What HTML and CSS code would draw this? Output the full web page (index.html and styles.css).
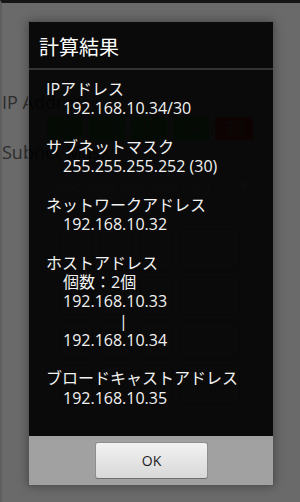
FILE: index.html
```html
<!DOCTYPE html>
<html lang="ja">
<head>
    <meta charset="UTF-8">
    <meta name="viewport" content="width=device-width, initial-scale=1.0">
    <title>計算結果</title>
    <link rel="stylesheet" href="styles.css">
</head>
<body>

    <!-- the calculator behind the dialog (dimmed) -->
    <div class="app">
        <div class="field-label">IP Address</div>
        <div class="ip-row">
            <span class="octet">192</span><span class="dot">.</span>
            <span class="octet">168</span><span class="dot">.</span>
            <span class="octet">10</span><span class="dot">.</span>
            <span class="octet">34</span><span class="dot">/</span>
            <span class="prefix">30</span>
        </div>
        <div class="field-label">Subnet Mask</div>
        <div class="spinner">255.255.255.252 (30)<span class="arrow">▼</span></div>
        <div class="keypad">
            <div class="key"></div><div class="key"></div><div class="key"></div><div class="key wide">オール<br>クリア</div>
            <div class="key"></div><div class="key"></div><div class="key"></div><div class="key wide">クリア</div>
            <div class="key"></div><div class="key"></div><div class="key"></div><div class="key wide">→</div>
            <div class="key"></div><div class="key"></div><div class="key"></div><div class="key wide">←</div>
        </div>
    </div>

    <div class="dialog">
        <div class="dialog-title">計算結果</div>
        <div class="dialog-body">
            <div class="group">
                <div class="line">IPアドレス</div>
                <div class="line value">192.168.10.34/30</div>
            </div>
            <div class="group">
                <div class="line">サブネットマスク</div>
                <div class="line value">255.255.255.252 (30)</div>
            </div>
            <div class="group">
                <div class="line">ネットワークアドレス</div>
                <div class="line value">192.168.10.32</div>
            </div>
            <div class="group">
                <div class="line">ホストアドレス</div>
                <div class="line value">個数：2個</div>
                <div class="line value">192.168.10.33</div>
                <div class="line pipe">|</div>
                <div class="line value">192.168.10.34</div>
            </div>
            <div class="group">
                <div class="line">ブロードキャストアドレス</div>
                <div class="line value">192.168.10.35</div>
            </div>
        </div>
        <div class="dialog-buttons">
            <button class="ok-btn">OK</button>
        </div>
    </div>

</body>
</html>
```

FILE: styles.css
```css
body {
    margin: 0;
    font-family: "Open Sans", "Noto Sans CJK JP", sans-serif;
    background-color: #6a6a6a;
    overflow: hidden;
}
.app {
    height: 499px;
    border-top: 3px solid #151515;
    border-left: 2px solid #5e5e5e;
    background-color: #6a6a6a;
}
.field-label {
    font-size: 18px;
    line-height: 24px;
    color: #2c2c2c;
}
.app > .field-label:first-child {
    margin-top: 87px;
}
.ip-row {
    display: flex;
    align-items: center;
    height: 23px;
    margin-top: 3px;
    margin-left: 45px;
    font-size: 16px;
}
.octet {
    background-color: #2f6e2f;
    color: #5a5a5a;
    width: 36px;
    height: 23px;
    line-height: 23px;
    text-align: center;
}
.dot {
    width: 6px;
    text-align: center;
    color: #5a5a5a;
}
.prefix {
    background-color: #8a2424;
    color: #5a5a5a;
    width: 38px;
    height: 23px;
    line-height: 23px;
    text-align: center;
}
.spinner {
    display: flex;
    align-items: center;
    height: 33px;
    margin: 5px 30px 0 48px;
    padding-left: 6px;
    font-size: 16px;
    color: #7a7a7a;
}
.arrow {
    margin-left: auto;
    margin-right: 22px;
    font-size: 9px;
}
.keypad {
    display: grid;
    grid-template-columns: 33px 33px 33px 60px;
    grid-template-rows: 42px 38px 38px 40px;
    gap: 6px 7px;
    margin: 27px 0 0 58px;
}
.key {
    border: 1px solid #4a4a4a;
    border-radius: 3px;
    color: #6a6a6a;
    font-size: 13px;
    line-height: 15px;
    display: flex;
    align-items: center;
    justify-content: center;
    text-align: center;
}

/* dialog */
.dialog {
    position: absolute;
    top: 21px;
    left: 28px;
    width: 244px;
    border: 1px solid #555;
    box-shadow: 0 0 10px rgba(0, 0, 0, 0.35);
}
.dialog-title {
    height: 42px;
    line-height: 42px;
    padding: 4px 0 0 10px;
    font-family: "Noto Sans CJK JP", sans-serif;
    font-size: 20px;
    color: #fff;
    background-color: rgba(0, 0, 0, 0.9);
    border-bottom: 2px solid #343434;
}
.dialog-body {
    height: 356px;
    padding: 10px 0 0 17px;
    background-color: rgba(0, 0, 0, 0.9);
    color: #f2f2f2;
    font-size: 16px;
}
.line {
    line-height: 19.3px;
    height: 19.3px;
    white-space: nowrap;
}
.group {
    margin-bottom: 19.3px;
}
.value {
    padding-left: 17px;
}
.pipe {
    padding-left: 73px;
}
.dialog-buttons {
    height: 49px;
    box-sizing: border-box;
    padding-top: 6px;
    background-color: #a1a1a1;
    display: flex;
    justify-content: center;
    align-items: flex-start;
}
.ok-btn {
    width: 113px;
    height: 37px;
    margin-left: 1px;
    font-family: "Open Sans", sans-serif;
    font-size: 14px;
    color: #1e1e1e;
    background: linear-gradient(#f2f2f2, #d8d8d8);
    border: 1px solid #8e8e8e;
    border-bottom-color: #6e6e6e;
    border-radius: 3px;
    padding: 0;
}
```
